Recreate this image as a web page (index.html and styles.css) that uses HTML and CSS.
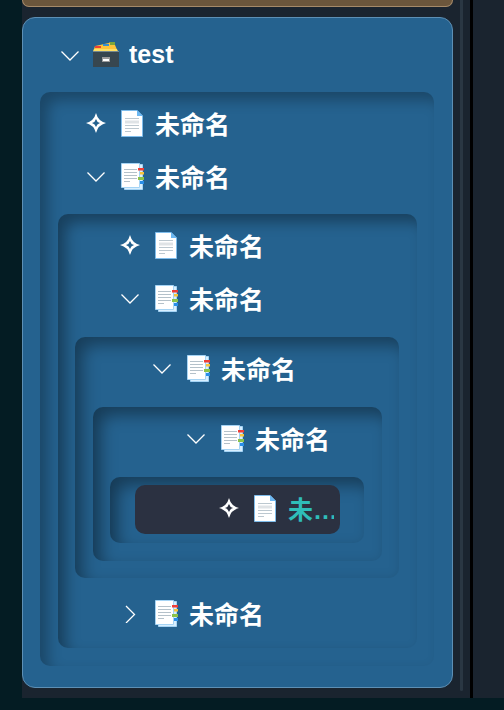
FILE: index.html
```html
<!DOCTYPE html>
<html lang="zh">
<head>
<meta charset="utf-8">
<meta name="viewport" content="width=device-width, initial-scale=1">
<title>test</title>
<link rel="stylesheet" href="styles.css">
</head>
<body>
<svg class="sprite" aria-hidden="true">
  <symbol id="down" viewBox="0 0 20 20"><path d="M1.5 6.500 10 15 18.500 6.500" fill="none" stroke="#fff" stroke-width="1.3"/></symbol>
  <symbol id="right" viewBox="0 0 20 20"><path d="M6 3 14.500 11.500 6 20" fill="none" stroke="#fff" stroke-width="1.3"/></symbol>
  <symbol id="star" viewBox="0 0 20 20"><path d="M10 0Q12 8 20 10Q12 12 10 20Q8 12 0 10Q8 8 10 0ZM10 6Q9.200 9.200 6 10Q9.200 10.800 10 14Q10.800 10.800 14 10Q10.800 9.200 10 6Z" fill="#fff" fill-rule="evenodd"/></symbol>
  <symbol id="page" viewBox="0 0 28 28">
    <path d="M3.500 1.500H19L24.500 7V27.500H3.500Z" fill="#fff" stroke="#7fbdec"/>
    <path d="M19 1V7H25Z" fill="#6db8f2"/>
    <path d="M7 9.500H21M7 16.500H21M7 19.500H21M7 22.500H13" stroke="#bcc8d0"/>
    <path d="M7 13H21" stroke="#dfe3e6" stroke-width="3"/>
  </symbol>
  <symbol id="tabs" viewBox="0 0 28 28">
    <path d="M6.500 2.500H24.500V27.500H6.500Z" fill="#d8efff" stroke="#a5d4f5"/>
    <path d="M3.500 1.500H21.500V25.500H3.500Z" fill="#fff" stroke="#a5d4f5"/>
    <path d="M6 7.500H19M6 10.500H19M6 13.500H19M6 16.500H19M6 19.500H12" stroke="#b4c1ca"/>
    <path d="M20 6h6v2.500h-6z" fill="#ee3e38"/>
    <path d="M22 10h4v2.500h-4z" fill="#f8c43a"/>
    <path d="M20 15h6v3h-6z" fill="#8bc34a"/>
    <path d="M22 19h4v3h-4z" fill="#298ee8"/>
  </symbol>
  <symbol id="box" viewBox="0 0 28 28">
    <path d="M1 11 3 5 8 4 12 3 17 2 18 1H23V4L26 11Z" fill="#fdc43b"/>
    <path d="M18 1h5v3h-5z" fill="#7da53b"/>
    <path d="M11 3h6v2h-6z" fill="#378fd0"/>
    <path d="M3 5h6v2h-6z" fill="#ee4034"/>
    <path d="M2 8H25L26 11H1Z" fill="#ffdf65"/>
    <path d="M1 10.500H27V26H1Z" fill="#37464f"/>
    <path d="M1 10.500H27" stroke="#738890"/>
    <path d="M10 16h8v5h-8z" fill="#9b9b9b"/>
    <path d="M11 18h6v2h-6z" fill="#fff"/>
  </symbol>
</svg>
<div class="app">
  <aside class="sidebar">
    <div class="list">
      <div class="card card-brown"></div>
      <div class="card">
        <button class="row root"><svg class="mark"><use href="#down"/></svg><svg class="icon"><use href="#box"/></svg><span class="name">test</span></button>
        <div class="group">
          <button class="row"><svg class="mark"><use href="#star"/></svg><svg class="icon"><use href="#page"/></svg><span class="name">未命名</span></button>
          <button class="row"><svg class="mark"><use href="#down"/></svg><svg class="icon"><use href="#tabs"/></svg><span class="name">未命名</span></button>
          <div class="group level-2">
            <button class="row"><svg class="mark"><use href="#star"/></svg><svg class="icon"><use href="#page"/></svg><span class="name">未命名</span></button>
            <button class="row"><svg class="mark"><use href="#down"/></svg><svg class="icon"><use href="#tabs"/></svg><span class="name">未命名</span></button>
            <div class="group level-3">
              <button class="row"><svg class="mark"><use href="#down"/></svg><svg class="icon"><use href="#tabs"/></svg><span class="name">未命名</span></button>
              <div class="group level-4">
                <button class="row"><svg class="mark"><use href="#down"/></svg><svg class="icon"><use href="#tabs"/></svg><span class="name">未命名</span></button>
                <div class="group level-5">
                  <button class="row selected"><svg class="mark"><use href="#star"/></svg><svg class="icon"><use href="#page"/></svg><span class="name">未命名</span></button>
                </div>
              </div>
            </div>
            <button class="row"><svg class="mark"><use href="#right"/></svg><svg class="icon"><use href="#tabs"/></svg><span class="name">未命名</span></button>
          </div>
        </div>
      </div>
    </div>
    <div class="scrollbar"></div>
  </aside>
  <main class="content"></main>
</div>
</body>
</html>
```
FILE: styles.css
```css
* {
  box-sizing: border-box;
}

body {
  margin: 0;
  background: #041c23;
  color: #fff;
  font-family: "Liberation Sans", "Noto Sans CJK SC", sans-serif;
}

.sprite {
  display: none;
}

.app {
  display: flex;
  min-height: calc(100vh - 12px);
  padding-left: 22px;
  margin-bottom: 12px;
}

.sidebar {
  flex: 1;
  min-width: 0;
  display: flex;
  gap: 7px;
  padding-right: 7px;
  background: #1a242f;
}

.list {
  flex: 1;
  min-width: 0;
}

.scrollbar {
  width: 3px;
  margin-bottom: 7px;
  background: #2a3743;
  border-radius: 0 0 2px 2px;
}

.content {
  flex: none;
  width: 34px;
  background: #1a242f;
  border-left: 3px solid #000;
}

.card {
  padding: 12px 18px 21px 17px;
  margin-bottom: 10px;
  background: #25628f;
  border: 1px solid #5d8fb4;
  border-radius: 13px;
}

.card-brown {
  height: 7px;
  padding: 0;
  background: #6b563c;
  border-color: #a58a69;
  border-top: 0;
  border-radius: 0 0 13px 13px;
}

.group {
  --indent: 21px;
  padding: 8px 0 9px;
  margin-top: 13px;
  border-radius: 10px;
  box-shadow: inset 8px 8px 14px rgba(0, 0, 0, 0.28);
}

.level-2,
.level-4 {
  margin: 12px 17px 9px 18px;
}

.level-3,
.level-5 {
  margin: 13px 18px 9px 17px;
}

.level-2 {
  --indent: 37px;
  box-shadow: inset 8px 8px 14px rgba(0, 0, 0, 0.34);
}

.level-3 {
  --indent: 52px;
  margin-bottom: 12px;
  box-shadow: inset 8px 8px 16px rgba(0, 0, 0, 0.36);
}

.level-4 {
  --indent: 68px;
  margin-top: 13px;
  margin-bottom: 8px;
  box-shadow: inset 8px 8px 16px rgba(0, 0, 0, 0.38);
}

.level-5 {
  --indent: 84px;
  box-shadow: inset 8px 8px 16px rgba(0, 0, 0, 0.38);
}

.row {
  display: flex;
  align-items: center;
  width: calc(100% - 49px);
  height: 49px;
  padding: 0 6px 3px var(--indent);
  margin: 0 24px 0 25px;
  color: inherit;
  background: none;
  border: 0;
  border-radius: 10px;
  font: bold 25px "Liberation Sans", "Noto Sans CJK SC", sans-serif;
  text-align: left;
}

.row + .row {
  margin-top: 4px;
}

.root {
  --indent: 20px;
  padding-bottom: 0;
  margin-left: 0;
}

.selected {
  background: #2b3141;
}

.selected .name {
  color: #2fbdb9;
}

.mark {
  flex: none;
  width: 20px;
  height: 20px;
}

.icon {
  flex: none;
  width: 28px;
  height: 28px;
  margin: 0 9px 0 12px;
}

.name {
  padding-right: 1px;
  overflow: hidden;
  text-overflow: ellipsis;
  white-space: nowrap;
}
```
